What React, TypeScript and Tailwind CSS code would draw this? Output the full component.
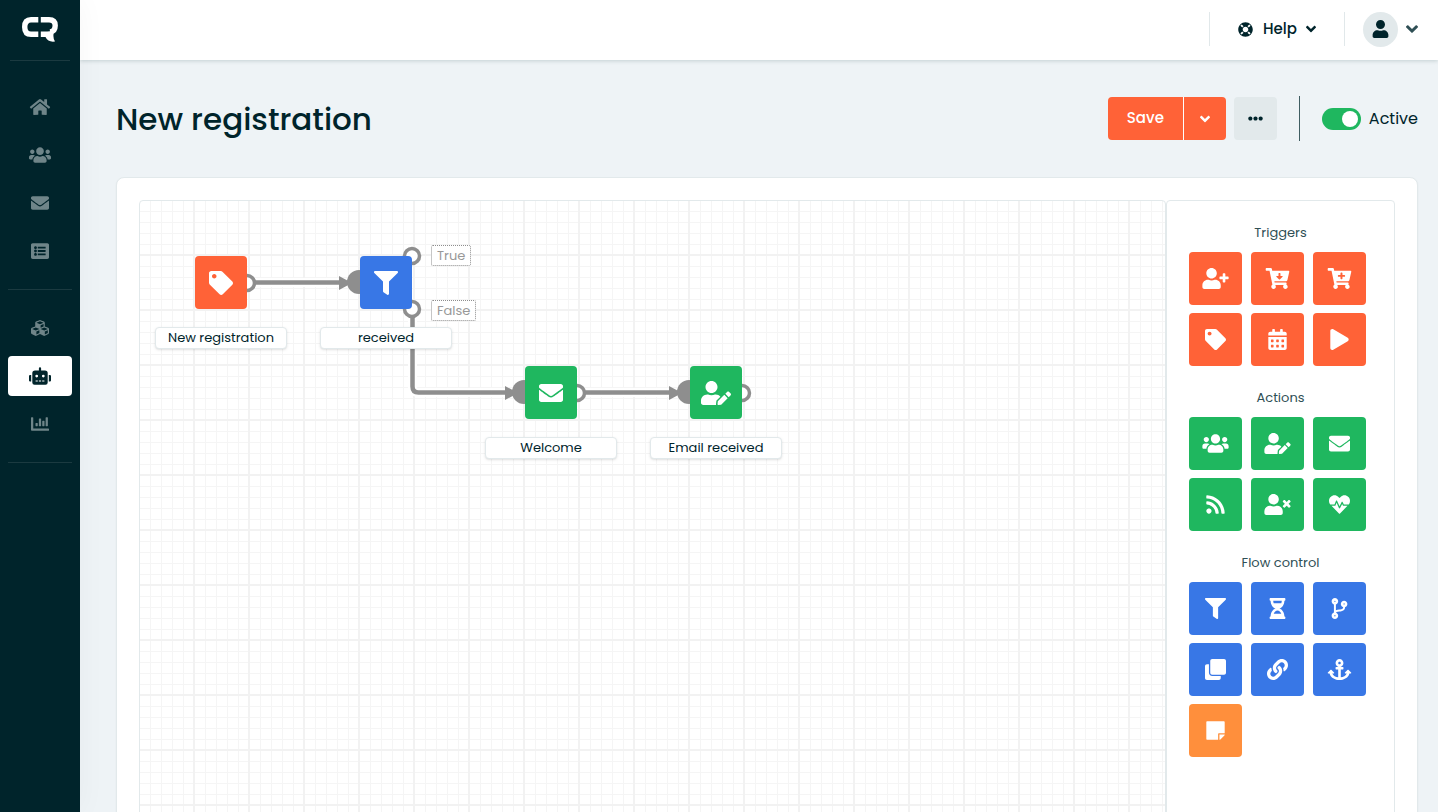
import React from 'react';
import type { IconType } from 'react-icons';
import {
  FaAnchor,
  FaAngleDown,
  FaCalendarAlt,
  FaCartArrowDown,
  FaCartPlus,
  FaChartBar,
  FaClone,
  FaCodeBranch,
  FaCubes,
  FaEllipsisH,
  FaEnvelope,
  FaFilter,
  FaHeartbeat,
  FaHome,
  FaHourglassHalf,
  FaLifeRing,
  FaLink,
  FaListAlt,
  FaPlay,
  FaRobot,
  FaRss,
  FaStickyNote,
  FaTag,
  FaUser,
  FaUserEdit,
  FaUserPlus,
  FaUserTimes,
  FaUsers,
} from 'react-icons/fa';

interface NavItem {
  label: string;
  icon: IconType;
  active?: boolean;
}

interface PaletteItem {
  label: string;
  icon: IconType;
  color: string;
}

interface FlowNode {
  id: string;
  label: string;
  icon: IconType;
  color: string;
  x: number;
  y: number;
}

const colors = {
  trigger: 'bg-[#ff6237]',
  action: 'bg-[#1fb75f]',
  flow: 'bg-[#3877e6]',
  note: 'bg-[#ff8f3c]',
};

const mainNav: NavItem[] = [
  { label: 'Home', icon: FaHome },
  { label: 'Contacts', icon: FaUsers },
  { label: 'Emails', icon: FaEnvelope },
  { label: 'Forms', icon: FaListAlt },
];

const toolsNav: NavItem[] = [
  { label: 'Integrations', icon: FaCubes },
  { label: 'Automations', icon: FaRobot, active: true },
  { label: 'Reports', icon: FaChartBar },
];

const palette: { title: string; items: PaletteItem[] }[] = [
  {
    title: 'Triggers',
    items: [
      { label: 'Contact added', icon: FaUserPlus, color: colors.trigger },
      { label: 'Order placed', icon: FaCartArrowDown, color: colors.trigger },
      { label: 'Product purchased', icon: FaCartPlus, color: colors.trigger },
      { label: 'Tag added', icon: FaTag, color: colors.trigger },
      { label: 'Date', icon: FaCalendarAlt, color: colors.trigger },
      { label: 'Manual start', icon: FaPlay, color: colors.trigger },
    ],
  },
  {
    title: 'Actions',
    items: [
      { label: 'Change group', icon: FaUsers, color: colors.action },
      { label: 'Edit contact', icon: FaUserEdit, color: colors.action },
      { label: 'Send email', icon: FaEnvelope, color: colors.action },
      { label: 'RSS', icon: FaRss, color: colors.action },
      { label: 'Remove contact', icon: FaUserTimes, color: colors.action },
      { label: 'Health check', icon: FaHeartbeat, color: colors.action },
    ],
  },
  {
    title: 'Flow control',
    items: [
      { label: 'Filter', icon: FaFilter, color: colors.flow },
      { label: 'Wait', icon: FaHourglassHalf, color: colors.flow },
      { label: 'Split', icon: FaCodeBranch, color: colors.flow },
      { label: 'Duplicate', icon: FaClone, color: colors.flow },
      { label: 'Link', icon: FaLink, color: colors.flow },
      { label: 'Anchor', icon: FaAnchor, color: colors.flow },
      { label: 'Note', icon: FaStickyNote, color: colors.note },
    ],
  },
];

const nodes: FlowNode[] = [
  { id: 'start', label: 'New registration', icon: FaTag, color: colors.trigger, x: 55, y: 55 },
  { id: 'filter', label: 'received', icon: FaFilter, color: colors.flow, x: 220, y: 55 },
  { id: 'welcome', label: 'Welcome', icon: FaEnvelope, color: colors.action, x: 385, y: 165 },
  { id: 'update', label: 'Email received', icon: FaUserEdit, color: colors.action, x: 550, y: 165 },
];

const branches = [
  { label: 'True', x: 291, y: 44 },
  { label: 'False', x: 291, y: 99 },
];

const edges = [
  'M115 81.5H201',
  'M272.5 116V185.5Q272.5 191.5 278.5 191.5H367',
  'M445 191.5H531',
];

const arrows = [
  { x: 199, y: 82 },
  { x: 365, y: 192 },
  { x: 529, y: 192 },
];

const inputs = [
  { x: 219, y: 81 },
  { x: 384, y: 191 },
  { x: 549, y: 191 },
];

const outputs = [
  { x: 107, y: 82 },
  { x: 272, y: 55 },
  { x: 272, y: 108 },
  { x: 437, y: 192 },
  { x: 602, y: 192 },
];

function Logo() {
  return (
    <svg viewBox="0 0 36 25" className="h-[25px] w-9" aria-label="CR">
      <g fill="none" stroke="#fff" strokeWidth="5.4">
        <path d="M16.3 2.7H9Q2.7 2.7 2.7 10T9 17.3H16.3" />
        <path d="M18.8 2.7H27Q33.2 2.7 33.2 8.5Q33.2 14.5 28 15" />
      </g>
      <path d="M18.8 14.6H25L31 14L31.500 17.500Q31 21.500 33 24.500Q26 25.500 23.500 20H18.800Z" fill="#fff" />
    </svg>
  );
}

function NavLink({ item }: { item: NavItem }) {
  const Icon = item.icon;
  return (
    <a
      href="#"
      aria-label={item.label}
      className={`flex h-10 items-center justify-center rounded ${
        item.active ? 'bg-white text-[#00242b]' : 'text-[#6f8589]'
      }`}
    >
      <Icon className="h-[18px] w-[22px]" />
    </a>
  );
}

function Sidebar() {
  return (
    <aside className="z-20 flex w-20 shrink-0 flex-col bg-[#00242b] px-2 shadow-[0_0_30px_rgba(0,0,0,0.04)]">
      <div className="mx-0.5 flex h-[61px] items-center justify-center border-b border-[#1b3a40] pb-0.5">
        <Logo />
      </div>
      <nav className="flex flex-col">
        <div className="flex flex-col gap-2 border-b border-[#1b3a40] pt-[26px] pb-[18px]">
          {mainNav.map((item) => (
            <NavLink key={item.label} item={item} />
          ))}
        </div>
        <div className="flex flex-col gap-2 border-b border-[#1b3a40] py-[18px]">
          {toolsNav.map((item) => (
            <NavLink key={item.label} item={item} />
          ))}
        </div>
      </nav>
    </aside>
  );
}

function Header() {
  return (
    <header className="z-10 flex h-15 shrink-0 items-center justify-end bg-white pr-5 pb-0.5 shadow-[0_1px_4px_rgba(0,50,50,0.18)]">
      <button
        type="button"
        className="flex h-[34px] items-center border-x border-[#e1e8ea] px-7 text-[15px] font-medium"
      >
        <FaLifeRing className="size-[15px]" />
        <span className="mr-[9px] ml-[10px]">Help</span>
        <FaAngleDown className="h-4 w-[10px]" />
      </button>
      <button type="button" aria-label="Account" className="ml-[18px] flex items-center gap-2">
        <span className="flex size-[35px] items-center justify-center rounded-full bg-[#e2e9eb]">
          <FaUser className="h-[18px] w-[23px]" />
        </span>
        <FaAngleDown className="h-5 w-3 text-[#2f4f55]" />
      </button>
    </header>
  );
}

function Toolbar() {
  return (
    <div className="flex h-[45px] items-center justify-between">
      <h1 className="text-[31px] leading-10 font-medium">New registration</h1>
      <div className="flex items-center">
        <div className="flex h-[43px] overflow-hidden rounded text-[15px] font-medium text-white">
          <button type="button" className="w-[75px] bg-[#ff6237]">
            Save
          </button>
          <button
            type="button"
            aria-label="More save options"
            className="flex w-[43px] items-center justify-center border-l border-white bg-[#ff6237]"
          >
            <FaAngleDown className="h-4 w-[10px]" />
          </button>
        </div>
        <button
          type="button"
          aria-label="More actions"
          className="ml-2 flex size-[43px] items-center justify-center rounded bg-[#e2e9eb]"
        >
          <FaEllipsisH className="size-[15px]" />
        </button>
        <div className="ml-[22px] h-[45px] w-px bg-[#3f5d62]" />
        <label className="ml-[22px] flex items-center gap-2 text-base">
          <input type="checkbox" role="switch" defaultChecked className="peer sr-only" />
          <span className="flex h-[22px] w-[39px] items-center rounded-full bg-slate-300 px-[3px] peer-checked:justify-end peer-checked:bg-[#1fb75f]">
            <span className="size-4 rounded-full bg-white" />
          </span>
          Active
        </label>
      </div>
    </div>
  );
}

function Connectors() {
  return (
    <svg className="absolute inset-0 size-full" aria-hidden="true">
      {edges.map((d) => (
        <g key={d} fill="none">
          <path d={d} stroke="#fff" strokeWidth="9" />
          <path d={d} stroke="#8e8e8e" strokeWidth="4.5" />
        </g>
      ))}
      {arrows.map(({ x, y }) => (
        <path key={x} d={`M${x} ${y - 7}L${x + 13} ${y}L${x} ${y + 7}Z`} fill="#8e8e8e" />
      ))}
      {inputs.map(({ x, y }) => (
        <circle key={x} cx={x} cy={y} r="12" fill="#8e8e8e" />
      ))}
      {outputs.map(({ x, y }) => (
        <circle key={`${x}-${y}`} cx={x} cy={y} r="7.5" fill="#fff" stroke="#8e8e8e" strokeWidth="3.5" />
      ))}
    </svg>
  );
}

function Node({ node }: { node: FlowNode }) {
  const Icon = node.icon;
  return (
    <div
      className="absolute flex w-[132px] -translate-x-10 flex-col items-center gap-[18px]"
      style={{ left: node.x, top: node.y }}
    >
      <button
        type="button"
        aria-label={node.label}
        className={`flex h-[53px] w-13 items-center justify-center rounded text-white ${node.color}`}
      >
        <Icon className="h-6 w-[30px]" />
      </button>
      <span className="h-[22px] w-full rounded border border-[#e2e9eb] bg-white text-center text-[13px] leading-5 shadow-sm">
        {node.label}
      </span>
    </div>
  );
}

function Canvas() {
  return (
    <section
      aria-label="Automation"
      className="relative min-h-[900px] flex-1 overflow-hidden rounded border border-[#e2e9eb] bg-[repeating-linear-gradient(90deg,transparent_0_53px,#f2f2f2_53px_55px),repeating-linear-gradient(180deg,transparent_0_53px,#f2f2f2_53px_55px),repeating-linear-gradient(90deg,transparent_0_10px,#f5f5f5_10px_11px),repeating-linear-gradient(180deg,transparent_0_10px,#f5f5f5_10px_11px)]"
    >
      <Connectors />
      {nodes.map((node) => (
        <Node key={node.id} node={node} />
      ))}
      {branches.map((branch) => (
        <span
          key={branch.label}
          className="absolute rounded-xs border border-dotted border-[#8e8e8e] bg-white px-[5px] text-[13px] leading-[19px] text-[#999]"
          style={{ left: branch.x, top: branch.y }}
        >
          {branch.label}
        </span>
      ))}
    </section>
  );
}

function Palette() {
  return (
    <aside className="flex w-[229px] shrink-0 flex-col gap-[22px] rounded border border-[#e2e9eb] px-[22px] pt-[22px]">
      {palette.map((group) => (
        <section key={group.title}>
          <h2 className="text-center text-[13px] leading-5 text-[#2f4f55]">{group.title}</h2>
          <div className="mt-[9px] grid grid-cols-[repeat(3,53px)] gap-x-[9px] gap-y-2">
            {group.items.map(({ label, icon: Icon, color }) => (
              <button
                key={label}
                type="button"
                aria-label={label}
                className={`flex h-[53px] items-center justify-center rounded text-white ${color}`}
              >
                <Icon className="h-[21px] w-[27px]" />
              </button>
            ))}
          </div>
        </section>
      ))}
    </aside>
  );
}

export default function App() {
  return (
    <div className="flex h-screen bg-[#eef3f6] font-[Poppins,Inter,sans-serif] text-[#00242b]">
      <Sidebar />
      <div className="flex min-w-0 flex-1 flex-col">
        <Header />
        <main className="flex-1 overflow-y-auto pt-9 pr-5 pb-9 pl-9 [scrollbar-width:none]">
          <Toolbar />
          <div className="mt-9 flex rounded-lg border border-[#e2e9eb] bg-white p-[22px] shadow-xs">
            <Canvas />
            <Palette />
          </div>
        </main>
      </div>
    </div>
  );
}
